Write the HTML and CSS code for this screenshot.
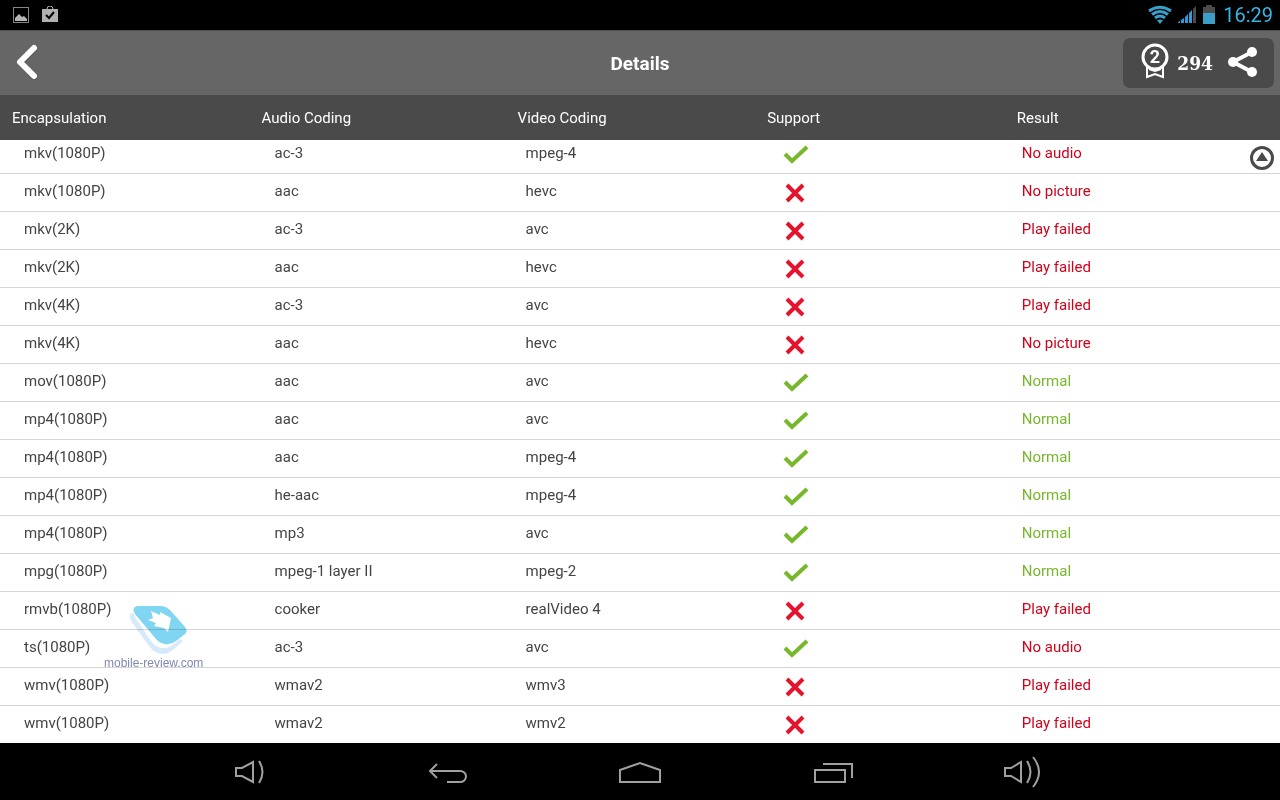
FILE: index.html
```html
<!DOCTYPE html>
<html lang="en">
<head>
  <meta charset="UTF-8">
  <meta name="viewport" content="width=device-width, initial-scale=1.0">
  <title>Details</title>
  <link rel="stylesheet" href="styles.css">
</head>
<body>

<svg class="defs" aria-hidden="true">
  <symbol id="yes" viewBox="0 0 26 20">
    <path d="M2 9l7 7L24 2" fill="none" stroke="#77b72b" stroke-width="4"/>
  </symbol>
  <symbol id="no" viewBox="0 0 26 20">
    <path d="M4 2l16 16M20 2L4 18" fill="none" stroke="#e3142b" stroke-width="4"/>
  </symbol>
</svg>

<div class="status-bar">
  <svg width="18" height="18" viewBox="0 0 18 18">
    <rect x="1.500" y="1.500" width="15" height="15" fill="none" stroke="#868686"/>
    <path d="M3 15v-3l4-4 3 3 2-1 3 3v2z" fill="#b5b5b5"/>
  </svg>
  <svg width="18" height="18" viewBox="0 0 18 18">
    <path d="M0 3h16v13H0z" fill="#b0b0b0"/>
    <path d="M5 3a3 3 0 0 1 6 0" fill="none" stroke="#b0b0b0"/>
    <path d="M4 9l3 3 5-6" fill="none" stroke="#000" stroke-width="2"/>
  </svg>
  <div class="status-right">
    <svg width="24" height="20" viewBox="0 0 24 20" fill="none" stroke="#3a9fc8" stroke-width="3">
      <path d="M1 6q11-7.500 22 0M4 9.500q8-6 16 0M7 13q5-4 10 0"/>
      <path d="M9 15.500q3-2 6 0L12 19z" fill="#3a9fc8" stroke="none"/>
    </svg>
    <svg width="20" height="20" viewBox="0 0 20 20" fill="#2a9bdc">
      <path d="M1 18v-1l2-1v2zM4 18v-3l3-2v5zM8 18v-6l3-3v9zM12 18V8l3-3v13z"/>
      <path d="M16 18V4l3-3v17z" fill="#4c4c4c"/>
    </svg>
    <svg width="14" height="20" viewBox="0 0 14 20">
      <path d="M4 0h6v2h3v6H1V2h3z" fill="#4c4c4c"/>
      <path d="M1 8h12v11H1z" fill="#3a9fc8"/>
    </svg>
    <span class="clock">16:29</span>
  </div>
</div>

<header class="title-bar">
  <button class="back" aria-label="Back">
    <svg width="36" height="42" viewBox="0 0 36 42">
      <path d="M28 7L15 21l13 14" fill="none" stroke="#444" stroke-opacity=".5" stroke-width="6" stroke-linecap="round" stroke-linejoin="round"/>
      <path d="M28 6L14 20l14 14" fill="none" stroke="#fff" stroke-width="6" stroke-linecap="round" stroke-linejoin="round"/>
    </svg>
  </button>
  <h1>Details</h1>
  <button class="share" aria-label="Share score">
    <svg width="30" height="40" viewBox="0 0 30 40">
      <path d="M7 22v12l8-3 8 3V22M9 26l6 2 6-2" fill="none" stroke="#fff" stroke-width="2"/>
      <circle cx="15" cy="14" r="12" fill="#4a4a4a" stroke="#fff" stroke-width="3"/>
      <text class="medal" x="15" y="20" text-anchor="middle">2</text>
    </svg>
    <span class="score">294</span>
    <svg width="32" height="34" viewBox="0 0 32 34">
      <path d="M27 6L8 16l19 10" fill="none" stroke="#fff" stroke-width="4"/>
      <circle cx="27" cy="6" r="5" fill="#fff"/>
      <circle cx="8" cy="16" r="5" fill="#fff"/>
      <circle cx="27" cy="26" r="5" fill="#fff"/>
    </svg>
  </button>
</header>

<main>
  <table>
    <thead>
      <tr><th>Encapsulation</th><th>Audio Coding</th><th>Video Coding</th><th>Support</th><th>Result</th></tr>
    </thead>
    <tbody>
      <tr><td>mkv(1080P)</td><td>ac-3</td><td>mpeg-4</td><td><svg class="mark" role="img" aria-label="Yes"><use href="#yes"/></svg></td><td class="bad">No audio</td></tr>
      <tr><td>mkv(1080P)</td><td>aac</td><td>hevc</td><td><svg class="mark" role="img" aria-label="No"><use href="#no"/></svg></td><td class="bad">No picture</td></tr>
      <tr><td>mkv(2K)</td><td>ac-3</td><td>avc</td><td><svg class="mark" role="img" aria-label="No"><use href="#no"/></svg></td><td class="bad">Play failed</td></tr>
      <tr><td>mkv(2K)</td><td>aac</td><td>hevc</td><td><svg class="mark" role="img" aria-label="No"><use href="#no"/></svg></td><td class="bad">Play failed</td></tr>
      <tr><td>mkv(4K)</td><td>ac-3</td><td>avc</td><td><svg class="mark" role="img" aria-label="No"><use href="#no"/></svg></td><td class="bad">Play failed</td></tr>
      <tr><td>mkv(4K)</td><td>aac</td><td>hevc</td><td><svg class="mark" role="img" aria-label="No"><use href="#no"/></svg></td><td class="bad">No picture</td></tr>
      <tr><td>mov(1080P)</td><td>aac</td><td>avc</td><td><svg class="mark" role="img" aria-label="Yes"><use href="#yes"/></svg></td><td class="good">Normal</td></tr>
      <tr><td>mp4(1080P)</td><td>aac</td><td>avc</td><td><svg class="mark" role="img" aria-label="Yes"><use href="#yes"/></svg></td><td class="good">Normal</td></tr>
      <tr><td>mp4(1080P)</td><td>aac</td><td>mpeg-4</td><td><svg class="mark" role="img" aria-label="Yes"><use href="#yes"/></svg></td><td class="good">Normal</td></tr>
      <tr><td>mp4(1080P)</td><td>he-aac</td><td>mpeg-4</td><td><svg class="mark" role="img" aria-label="Yes"><use href="#yes"/></svg></td><td class="good">Normal</td></tr>
      <tr><td>mp4(1080P)</td><td>mp3</td><td>avc</td><td><svg class="mark" role="img" aria-label="Yes"><use href="#yes"/></svg></td><td class="good">Normal</td></tr>
      <tr><td>mpg(1080P)</td><td>mpeg-1 layer II</td><td>mpeg-2</td><td><svg class="mark" role="img" aria-label="Yes"><use href="#yes"/></svg></td><td class="good">Normal</td></tr>
      <tr><td>rmvb(1080P)</td><td>cooker</td><td>realVideo 4</td><td><svg class="mark" role="img" aria-label="No"><use href="#no"/></svg></td><td class="bad">Play failed</td></tr>
      <tr><td>ts(1080P)</td><td>ac-3</td><td>avc</td><td><svg class="mark" role="img" aria-label="Yes"><use href="#yes"/></svg></td><td class="bad">No audio</td></tr>
      <tr><td>wmv(1080P)</td><td>wmav2</td><td>wmv3</td><td><svg class="mark" role="img" aria-label="No"><use href="#no"/></svg></td><td class="bad">Play failed</td></tr>
      <tr><td>wmv(1080P)</td><td>wmav2</td><td>wmv2</td><td><svg class="mark" role="img" aria-label="No"><use href="#no"/></svg></td><td class="bad">Play failed</td></tr>
    </tbody>
  </table>

  <button class="to-top" aria-label="Scroll to top">
    <svg width="24" height="24" viewBox="0 0 24 24">
      <circle cx="12" cy="12" r="10.500" fill="#fff" stroke="#4a4a4a" stroke-width="3"/>
      <path d="M12 6l6 9H6z" fill="#4a4a4a"/>
    </svg>
  </button>

  <div class="watermark">
    <svg width="60" height="50" viewBox="0 0 60 50">
      <path d="M2 8Q0 10 2 16L20 41q6 8 14 8 5 0 10-4l10-9L8 8z" fill="#d6ebf9"/>
      <path d="M6 2Q3 5 6 12l16 24q6 8 15 7 4-1 8-4l12-10-40-25z" fill="#fff"/>
      <path d="M8 1h23q6 0 10 4l15 17q3 4 0 7l-9 7q-5 4-11 3-6-1-9-5L6 9Q2 3 8 1z" fill="#80d5f2"/>
      <path d="M22 6L31 10V7L42 13L39 27L35 23L25 21L27 18L19 15L24 13z" fill="#fff"/>
    </svg>
    <span>mobile-review.com</span>
  </div>
</main>

<nav class="nav-bar">
  <button aria-label="Volume down">
    <svg width="48" height="57" viewBox="0 0 48 57"><path d="M4 25h6l11-6v20l-11-6H4zM27 18q7 11 0 22"/></svg>
  </button>
  <button aria-label="Back">
    <svg width="48" height="57" viewBox="0 0 48 57"><path d="M13 21l-7 7 7 7M6 28h30a6 5.500 0 0 1 0 11H23"/></svg>
  </button>
  <button aria-label="Home">
    <svg width="48" height="57" viewBox="0 0 48 57"><path d="M4 27l20-7 20 7v12H4z"/></svg>
  </button>
  <button aria-label="Recent apps">
    <svg width="48" height="57" viewBox="0 0 48 57"><path d="M7 27h30v12H7zM15 21h29v14"/></svg>
  </button>
  <button aria-label="Volume up">
    <svg width="48" height="57" viewBox="0 0 48 57"><path d="M5 25h6l10-6v20l-10-6H5zM27 18q7 11 0 22M33 14q12 15 0 30"/></svg>
  </button>
</nav>

</body>
</html>
```

FILE: styles.css
```css
* {
  box-sizing: border-box;
}

body {
  margin: 0;
  min-height: 100vh;
  display: flex;
  flex-direction: column;
  font-family: Roboto, "Noto Sans", sans-serif;
  font-size: 15px;
  color: #444;
  background-color: #fff;
}

svg {
  display: block;
}

button {
  border: none;
  padding: 0;
  background: none;
  color: inherit;
  cursor: pointer;
}

.defs {
  position: absolute;
  width: 0;
  height: 0;
}

.status-bar {
  height: 30px;
  padding: 0 7px 0 12px;
  display: flex;
  align-items: center;
  gap: 12px;
  background-color: #000;
}

.status-right {
  margin-left: auto;
  display: flex;
  align-items: center;
  gap: 5px;
}

.clock {
  margin-left: 2px;
  font-size: 20px;
  color: #33b5e5;
}

.title-bar {
  height: 65px;
  padding: 0 6px;
  display: grid;
  grid-template-columns: 1fr auto 1fr;
  align-items: center;
  background-color: #666;
  border-top: 1px solid #505050;
  color: #fff;
}

.title-bar h1 {
  margin: 0;
  font-size: 19px;
  font-weight: bold;
}

.back {
  justify-self: start;
}

.share {
  justify-self: end;
  height: 50px;
  padding: 0 17px;
  display: flex;
  align-items: center;
  gap: 7px;
  background-color: #4a4a4a;
  border-radius: 7px;
}

.medal {
  font: bold 18px Roboto, sans-serif;
  fill: #fff;
}

.score {
  margin-right: 5px;
  font: bold 19px "DejaVu Serif Condensed", "DejaVu Serif", serif;
}

main {
  position: relative;
  flex: 1;
}

table {
  width: 100%;
  table-layout: fixed;
  border-collapse: separate;
  border-spacing: 0;
}

th {
  width: 19.5%;
  height: 45px;
  padding: 0 12px;
  text-align: left;
  font-weight: normal;
  color: #fff;
  background-color: #4a4a4a;
}

th:nth-child(2) {
  width: 20%;
}

th:last-child {
  width: auto;
}

td {
  height: 38px;
  padding: 0 0 4px 24px;
  line-height: 20px;
  border-bottom: 1px solid #d5d5d5;
}

td:nth-child(2) {
  padding-left: 25px;
}

td:nth-child(3) {
  padding-left: 20px;
}

td:nth-child(4) {
  padding: 0 0 0 28px;
}

td:nth-child(5) {
  padding-left: 17px;
}

tbody tr:first-child td {
  height: 34px;
  padding-bottom: 8px;
}

tbody tr:first-child td:nth-child(4) {
  padding-bottom: 4px;
}

tbody tr:last-child td {
  height: 37px;
  border-bottom: none;
}

.mark {
  width: 26px;
  height: 20px;
}

.good {
  color: #77b72b;
}

.bad {
  color: #d0021b;
}

.to-top {
  position: absolute;
  top: 51px;
  right: 6px;
}

.watermark {
  position: absolute;
  left: 104px;
  top: 510px;
  display: flex;
  flex-direction: column;
  font: 12px/16px "Liberation Sans Narrow", "Liberation Sans", sans-serif;
  color: #8088b0;
  mix-blend-mode: multiply;
}

.watermark svg {
  margin-left: 25px;
}

.nav-bar {
  height: 57px;
  display: flex;
  justify-content: center;
  background-color: #000;
}

.nav-bar button {
  width: 15%;
  display: flex;
  justify-content: center;
}

.nav-bar svg {
  fill: none;
  stroke: #a0a0a0;
  stroke-width: 2;
}
```
